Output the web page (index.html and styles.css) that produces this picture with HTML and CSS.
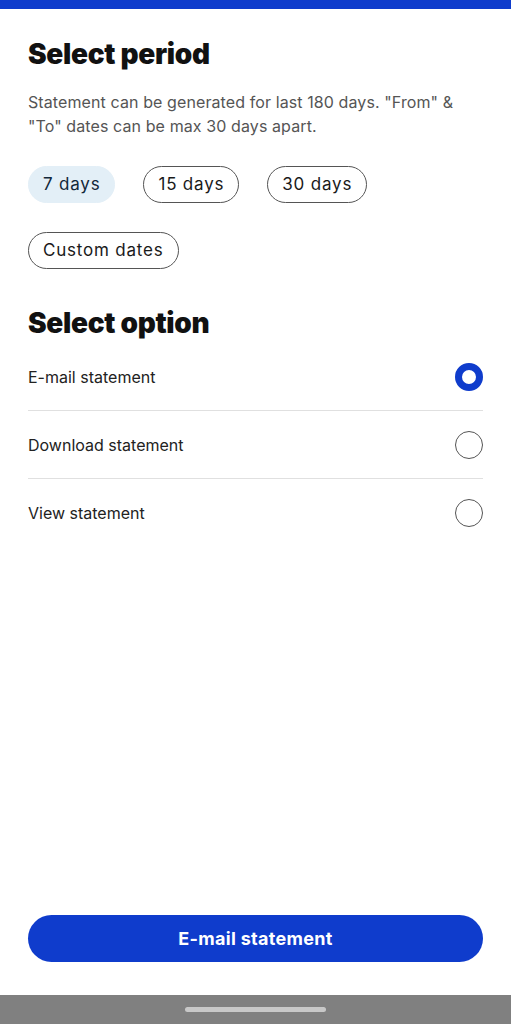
FILE: index.html
```html
<!DOCTYPE html>
<html>
<head>
<meta charset="utf-8">
<link rel="stylesheet" href="styles.css">
</head>
<body>
<div class="screen">
  <div class="topbar"></div>
  <main class="content">
    <h1 class="title">Select period</h1>
    <p class="desc">Statement can be generated for last 180 days. "From" &amp; "To" dates can be max 30 days apart.</p>
    <div class="chips">
      <span class="chip chip-active">7 days</span>
      <span class="chip">15 days</span>
      <span class="chip">30 days</span>
      <span class="chip">Custom dates</span>
    </div>
    <h2 class="title title-option">Select option</h2>
    <ul class="options">
      <li class="option"><span>E-mail statement</span><span class="radio radio-on"></span></li>
      <li class="option"><span>Download statement</span><span class="radio"></span></li>
      <li class="option"><span>View statement</span><span class="radio"></span></li>
    </ul>
    <button class="cta">E-mail statement</button>
  </main>
  <div class="navbar"><span class="handle"></span></div>
</div>
</body>
</html>
```
FILE: styles.css
```css
* { box-sizing: border-box; }
html, body { margin: 0; padding: 0; background: #fff; }
body { font-family: Inter, "Liberation Sans", sans-serif; color: #1a1a1a; }
.screen { width: 511px; height: 1024px; display: flex; flex-direction: column; }
.topbar { height: 9px; background: #0f3ccc; flex: none; }
.content { flex: 1; display: flex; flex-direction: column; padding: 0 28px; }
.title { margin: 0; font-size: 28px; font-weight: 900; letter-spacing: -0.3px; line-height: 34px; color: #111; }
.content > .title:first-child { margin-top: 28px; }
.desc { margin: 19px 0 0; font-size: 16px; letter-spacing: 0.1px; line-height: 24px; color: #555; }
.chips { display: flex; flex-wrap: wrap; gap: 29px 28px; margin-top: 28px; width: 400px; }
.chip { height: 37px; padding: 0 14px; border: 1px solid #555; border-radius: 19px; font-size: 17px; letter-spacing: 0.8px; line-height: 35px; color: #1a1a1a; }
.chip-active { background: #e3eff7; border-color: #e3eff7; color: #12283a; }
.title-option { margin-top: 37px; }
.options { list-style: none; margin: 3px 0 0; padding: 0; }
.option { display: flex; align-items: center; justify-content: space-between; height: 68px; border-bottom: 1px solid #e0e0e0; font-size: 16px; color: #222; }
.option:last-child { border-bottom: none; }
.radio { width: 28px; height: 28px; border-radius: 50%; border: 1.5px solid #555; }
.radio-on { border: 7px solid #0f3ccc; }
.cta { margin-top: auto; margin-bottom: 33px; height: 47px; border: none; border-radius: 24px; background: #0f3ccc; color: #fff; font-family: inherit; font-size: 18px; letter-spacing: 0.3px; font-weight: 700; width: 100%; }
.navbar { height: 29px; background: #808080; flex: none; display: flex; justify-content: center; padding-top: 12px; }
.handle { width: 141px; height: 5px; border-radius: 3px; background: #c8c8c8; }
```
